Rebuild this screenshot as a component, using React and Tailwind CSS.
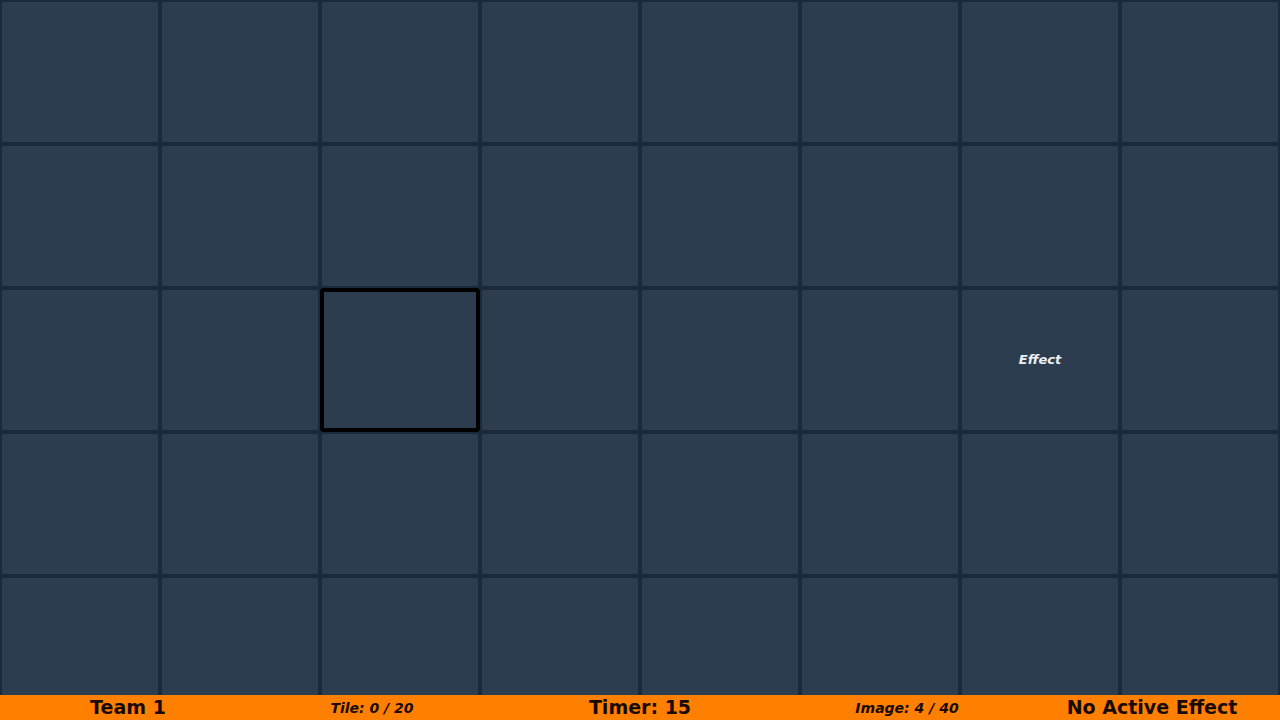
import React from 'react';

const COLS = 8;
const ROWS = 5;

export default function App() {
    const selected = 2 * COLS + 2;
    const effectTile = 2 * COLS + 6;
    const tiles = Array.from({ length: COLS * ROWS }, (_, i) => i);

    return (
        <div className="relative w-[1280px] h-[720px] overflow-hidden bg-[#1c2a3e]" style={{ fontFamily: '"DejaVu Sans", Verdana, sans-serif' }}>
            <div className="grid grid-cols-8 grid-rows-5 h-[720px]">
                {tiles.map(i => (
                    <div
                        key={i}
                        className={`flex items-center justify-center rounded-[4px] bg-[#2d3d50] ${i === selected ? 'border-4 border-black' : 'border-2 border-[#1c2a3e]'}`}
                    >
                        {i === effectTile && (
                            <span className="text-[13px] font-bold italic text-[#eef0f4]">Effect</span>
                        )}
                    </div>
                ))}
            </div>

            {/* status bar over the last row */}
            <div className="absolute left-0 right-0 bottom-0 h-[25px] bg-[#ff7f00] grid grid-cols-5 items-center text-[#170a02]">
                <div className="text-center text-[19px] font-bold leading-none">Team 1</div>
                <div className="text-center text-[14px] font-bold italic leading-none pr-[24px]">Tile: 0 / 20</div>
                <div className="text-center text-[19px] font-bold leading-none">Timer: 15</div>
                <div className="text-center text-[14px] font-bold italic leading-none pl-[22px]">Image: 4 / 40</div>
                <div className="text-center text-[19px] font-bold leading-none">No Active Effect</div>
            </div>
        </div>
    );
}
